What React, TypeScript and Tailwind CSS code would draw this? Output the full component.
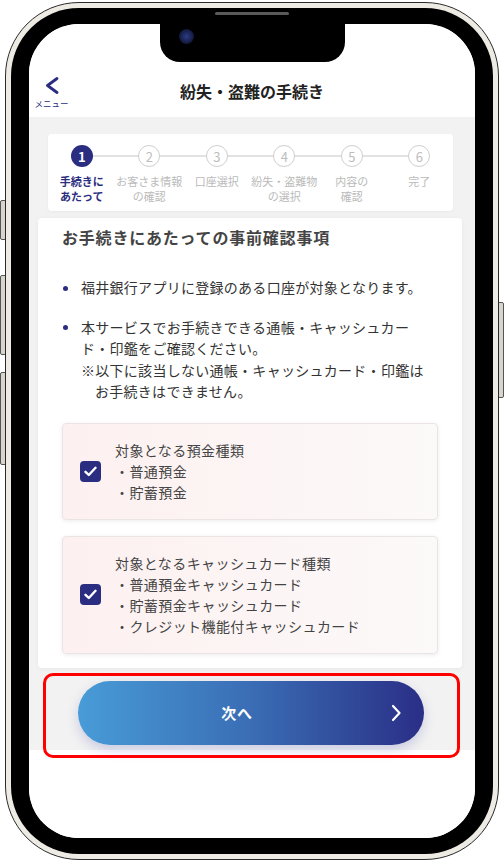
import React from 'react';

const FONT = '"Noto Sans CJK JP", "Noto Sans", sans-serif';

const steps: string[][] = [
  ['手続きに', 'あたって'],
  ['お客さま情報', 'の確認'],
  ['口座選択'],
  ['紛失・盗難物', 'の選択'],
  ['内容の', '確認'],
  ['完了'],
];

const CheckBox = () => (
  <div className="w-[21px] h-[21px] shrink-0 rounded-[4px] bg-[#2b2e80] flex items-center justify-center">
    <svg width="13" height="11" viewBox="0 0 13 11" fill="none">
      <path d="M1.5 5.8 L4.8 9 L11.5 1.8" stroke="white" strokeWidth="2.4" strokeLinecap="round" strokeLinejoin="round" />
    </svg>
  </div>
);

const TargetCard = ({ title, items }: { title: string; items: string[] }) => (
  <div className="flex items-center rounded-[4px] border border-[#ebe4e4] bg-linear-to-r from-[#fdf0f0] to-[#fcf9f9] shadow-[0_1px_4px_rgba(0,0,0,0.08)] py-[16px] pl-[17px]">
    <CheckBox />
    <div className="ml-[14px] text-[14px] leading-[21px] tracking-[0.03em] text-[#444]">
      <div>{title}</div>
      {items.map((it) => (
        <div key={it}>・{it}</div>
      ))}
    </div>
  </div>
);

const Stepper = () => (
  <div className="mx-[19px] mr-[22px] rounded-[4px] bg-white shadow-[0_1px_3px_rgba(0,0,0,0.04)] pt-[11px] pb-[7px]">
    <div className="relative grid grid-cols-6">
      <div className="absolute left-[34px] right-[34px] top-[10px] h-[2px] bg-[#e2e2e2]" />
      {steps.map((label, i) => (
        <div key={i} className="relative flex flex-col items-center">
          {i === 0 ? (
            <div className="w-[22px] h-[22px] rounded-full bg-[#2b2e80] text-white text-[13px] font-bold flex items-center justify-center leading-none">
              1
            </div>
          ) : (
            <div className="w-[22px] h-[22px] rounded-full bg-white border-[1.5px] border-[#cfcfcf] text-[#bdbdbd] text-[13px] flex items-center justify-center leading-none">
              {i + 1}
            </div>
          )}
          <div
            className={`mt-[7px] text-[11px] leading-[15px] text-center whitespace-nowrap ${
              i === 0 ? 'font-bold text-[#2b2e80]' : 'text-[#bababa]'
            }`}
          >
            {label.map((l) => (
              <div key={l}>{l}</div>
            ))}
          </div>
        </div>
      ))}
    </div>
  </div>
);

export default function App() {
  return (
    <div className="relative w-[504px] h-[862px] bg-white overflow-hidden" style={{ fontFamily: FONT }}>
      {/* side buttons */}
      <div className="absolute left-0 top-[200px] w-[7px] h-[40px] rounded-l-[2px] border border-[#555] bg-[#d8d5ce]" />
      <div className="absolute left-0 top-[275px] w-[7px] h-[80px] rounded-l-[2px] border border-[#555] bg-[#d8d5ce]" />
      <div className="absolute left-0 top-[372px] w-[7px] h-[93px] rounded-l-[2px] border border-[#555] bg-[#d8d5ce]" />
      <div className="absolute right-0 top-[302px] w-[7px] h-[96px] rounded-r-[2px] border border-[#555] bg-[#d8d5ce]" />

      {/* phone body */}
      <div className="relative ml-[5px] mt-[2px] w-[494px] h-[858px] rounded-[74px] border border-[#2a2a2a] bg-[#eeebe5] p-[5px]">
        <div className="relative h-full rounded-[68px] bg-black px-[18px] py-[16px]">
          <div className="absolute left-[204px] top-[4px] w-[74px] h-[3px] rounded-full bg-[#5a5a5a]" />

          {/* screen */}
          <div className="relative h-full rounded-[50px] bg-white overflow-hidden flex flex-col">
            {/* notch */}
            <div className="absolute left-[131px] top-0 w-[185px] h-[38px] bg-black rounded-b-[20px] z-10">
              <div className="absolute left-[19px] top-[5px] w-[15px] h-[15px] rounded-full bg-[radial-gradient(circle,#2c3b86_0%,#18204a_55%,#05070f_100%)]" />
            </div>

            {/* header */}
            <div className="h-[93px] shrink-0 flex items-start pt-[53px] bg-white">
              <div className="w-[45px] flex flex-col items-center">
                <svg width="14" height="17" viewBox="0 0 14 17" fill="none">
                  <path d="M12 1.5 L2.5 8.5 L12 15.5" stroke="#2b2e80" strokeWidth="2.8" strokeLinecap="round" strokeLinejoin="round" />
                </svg>
                <span className="mt-[4px] text-[8.5px] leading-[11px] text-[#2b2e80] whitespace-nowrap">メニュー</span>
              </div>
              <div className="flex-1 text-center mt-[2px] text-[16px] leading-[24px] font-bold text-[#222]">
                紛失・盗難の手続き
              </div>
              <div className="w-[45px]" />
            </div>

            {/* content */}
            <div className="shrink-0 bg-[#f2f2f2] pt-[17px] flex flex-col">
              <Stepper />

              <div className="mt-[7px] ml-[9px] mr-[13px] h-[450px] rounded-[4px] bg-white shadow-[0_1px_4px_rgba(0,0,0,0.05)] px-[24px] pt-[7px]">
                <h2 className="text-[16px] leading-[24px] font-bold tracking-[0.05em] text-[#444]">
                  お手続きにあたっての事前確認事項
                </h2>

                <ul className="mt-[28px] flex flex-col gap-[18px] text-[14px] leading-[21.5px] tracking-[0.02em] text-[#333]">
                  <li className="flex">
                    <span className="w-[19px] shrink-0 pt-[8.5px]">
                      <span className="block ml-[1px] w-[5px] h-[5px] rounded-full bg-[#2b2e80]" />
                    </span>
                    <span>福井銀行アプリに登録のある口座が対象となります。</span>
                  </li>
                  <li className="flex">
                    <span className="w-[19px] shrink-0 pt-[8.5px]">
                      <span className="block ml-[1px] w-[5px] h-[5px] rounded-full bg-[#2b2e80]" />
                    </span>
                    <span>
                      <span className="block">本サービスでお手続きできる通帳・キャッシュカー</span>
                      <span className="block">ド・印鑑をご確認ください。</span>
                      <span className="block">※以下に該当しない通帳・キャッシュカード・印鑑は</span>
                      <span className="block pl-[14px]">お手続きはできません。</span>
                    </span>
                  </li>
                </ul>

                <div className="mt-[20px] flex flex-col gap-[16px]">
                  <TargetCard title="対象となる預金種類" items={['普通預金', '貯蓄預金']} />
                  <TargetCard
                    title="対象となるキャッシュカード種類"
                    items={['普通預金キャッシュカード', '貯蓄預金キャッシュカード', 'クレジット機能付キャッシュカード']}
                  />
                </div>
              </div>

              {/* next button */}
              <div className="relative pt-[13px] pb-[5px] flex justify-center">
                <button
                  type="button"
                  className="ml-[-2px] w-[346px] h-[64px] rounded-full bg-linear-to-r from-[#489cd7] via-[#3a6db5] to-[#2a2e86] shadow-[0_5px_12px_rgba(60,70,170,0.22)] flex items-center pr-[22px]"
                >
                  <span className="flex-1 pl-[6px] text-center text-[15px] font-bold text-white tracking-[0.05em]">次へ</span>
                  <svg width="12" height="18" viewBox="0 0 12 18" fill="none">
                    <path d="M3 2 L9.5 9 L3 16" stroke="white" strokeWidth="2.2" strokeLinecap="round" strokeLinejoin="round" />
                  </svg>
                </button>
                <div className="pointer-events-none absolute left-[14px] right-[15px] top-[5px] bottom-[-8px] rounded-[10px] border-[3px] border-[#ff0000]" />
              </div>
            </div>

            <div className="flex-1 bg-white" />
          </div>
        </div>
      </div>
    </div>
  );
}
